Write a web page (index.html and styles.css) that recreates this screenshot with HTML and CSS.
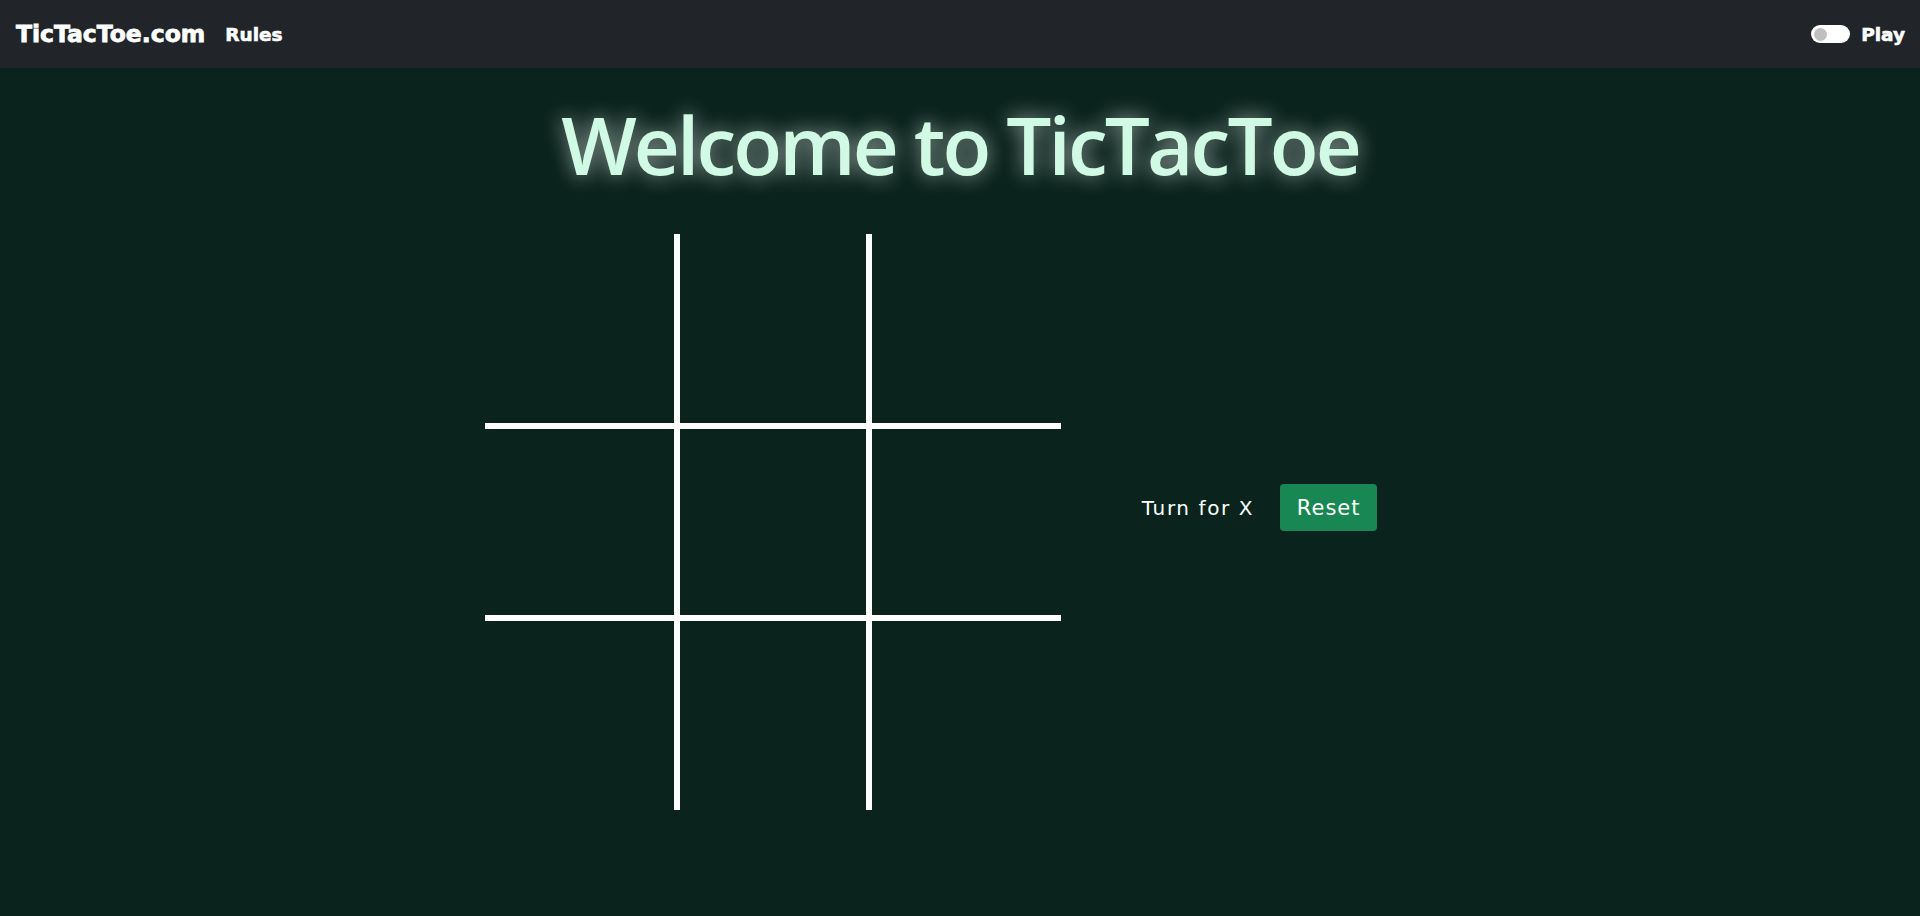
FILE: index.html
```html
<!DOCTYPE html>
<html lang="en">
<head>
<meta charset="utf-8">
<title>TicTacToe</title>
<link rel="stylesheet" href="styles.css">
</head>
<body>
<nav class="navbar">
  <div class="nav-left">
    <a class="brand" href="#">TicTacToe.com</a>
    <a class="nav-link" href="#">Rules</a>
  </div>
  <div class="nav-right">
    <span class="switch"><span class="knob"></span></span>
    <span class="nav-link play">Play</span>
  </div>
</nav>
<main class="main">
  <h1 class="title">Welcome to TicTacToe</h1>
  <div class="game">
    <div class="board">
      <div class="cell c-tl"></div>
      <div class="cell c-tm"></div>
      <div class="cell c-tr"></div>
      <div class="cell c-ml"></div>
      <div class="cell c-mm"></div>
      <div class="cell c-mr"></div>
      <div class="cell c-bl"></div>
      <div class="cell c-bm"></div>
      <div class="cell c-br"></div>
    </div>
    <div class="info">
      <span class="turn">Turn for X</span>
      <button class="reset">Reset</button>
    </div>
  </div>
</main>
</body>
</html>
```

FILE: styles.css
```css
* { box-sizing: border-box; }
html, body { margin: 0; padding: 0; }
body {
  background: #0a241d;
  min-height: 916px;
  font-family: "DejaVu Sans", sans-serif;
}
.navbar {
  height: 68px;
  background: #212529;
  display: flex;
  align-items: center;
  justify-content: space-between;
  padding: 0 15px 0 16px;
}
.nav-left, .nav-right { display: flex; align-items: center; }
.brand {
  color: #fff;
  text-decoration: none;
  font-family: "DejaVu Sans", sans-serif;
  font-weight: 900;
  font-size: 23.5px;
  letter-spacing: 0;
  margin-right: 20px;
  -webkit-text-stroke: 0.8px #fff;
}
.nav-link {
  color: #fff;
  text-decoration: none;
  font-family: "DejaVu Sans", sans-serif;
  font-weight: 700;
  font-size: 18.5px;
  -webkit-text-stroke: 0.6px #fff;
}
.switch {
  width: 39px;
  height: 18px;
  border-radius: 9px;
  background: #fff;
  display: flex;
  align-items: center;
  padding: 0 3px;
  margin-right: 11px;
}
.knob {
  width: 13px;
  height: 13px;
  border-radius: 50%;
  background: #bfbfbf;
}
.main { display: flex; flex-direction: column; align-items: center; }
.title {
  margin: 21px 0 0;
  font-family: "Open Sans", sans-serif;
  font-weight: 600;
  font-size: 80px;
  line-height: 109px;
  color: #d1fae5;
  text-shadow: 0 0 20px rgba(255, 255, 255, 0.6);
  letter-spacing: -2.9px;
}
.game {
  display: flex;
  align-items: flex-start;
  margin-top: 36px;
  margin-left: 2px;
}
.board {
  display: grid;
  grid-template-columns: repeat(3, 192px);
  grid-template-rows: repeat(3, 192px);
}
.cell { border: 0 solid #fff; }
.c-tl, .c-tm, .c-ml, .c-mm, .c-bl, .c-bm { border-right-width: 3px; }
.c-tm, .c-tr, .c-mm, .c-mr, .c-bm, .c-br { border-left-width: 3px; }
.c-tl, .c-tm, .c-tr, .c-ml, .c-mm, .c-mr { border-bottom-width: 3px; }
.c-ml, .c-mm, .c-mr, .c-bl, .c-bm, .c-br { border-top-width: 3px; }
.info {
  display: flex;
  align-items: center;
  margin-top: 250px;
  margin-left: 81px;
  padding-right: 60px;
}
.turn {
  color: #fff;
  font-family: "DejaVu Sans", sans-serif;
  font-size: 20px;
  letter-spacing: 1.6px;
  margin-right: 26px;
}
.reset {
  background: #198754;
  color: #fff;
  border: none;
  border-radius: 4px;
  width: 97px;
  height: 47px;
  font-family: "DejaVu Sans", sans-serif;
  font-size: 21px;
  letter-spacing: 1px;
  padding: 0;
}
```
